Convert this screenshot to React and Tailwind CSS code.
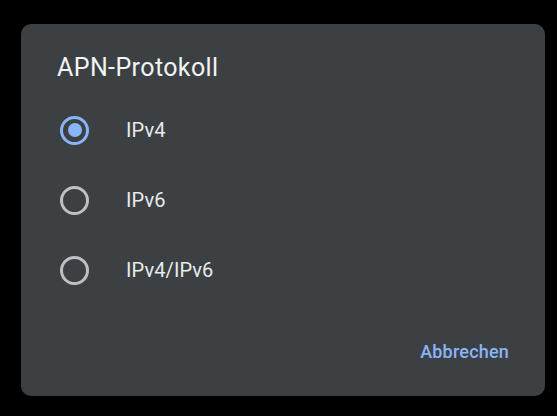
import React, { useState } from "react";

const options = ["IPv4", "IPv6", "IPv4/IPv6"];

const Radio = ({ checked }) => (
  <div
    className={`w-[29px] h-[29px] rounded-full border-[3px] flex items-center justify-center ${
      checked ? "border-[#8ab4f8]" : "border-[#bdc1c6]"
    }`}
  >
    {checked && <div className="w-[14px] h-[14px] rounded-full bg-[#8ab4f8]" />}
  </div>
);

const App = () => {
  const [selected, setSelected] = useState("IPv4");

  return (
    <div
      className="w-[557px] h-[416px] bg-black pt-[24px] pl-[21px]"
      style={{ fontFamily: "Roboto, 'Liberation Sans', sans-serif" }}
    >
      <div className="w-[524px] h-[372px] rounded-[10px] bg-[#3c4043] flex flex-col px-[36px] pt-[28px]">
        <h2 className="text-[25px] leading-[32px] tracking-[0.4px] text-[#f1f3f4] font-normal">
          APN-Protokoll
        </h2>
        <div className="mt-[11px] flex flex-col">
          {options.map((opt) => (
            <div
              key={opt}
              className="h-[70px] flex items-center pl-[3px] cursor-pointer"
              onClick={() => setSelected(opt)}
            >
              <Radio checked={selected === opt} />
              <span className="ml-[37px] text-[20px] leading-[24px] tracking-[0.1px] text-[#e8eaed]">
                {opt}
              </span>
            </div>
          ))}
        </div>
        <div className="mt-[26px] h-[40px] flex items-center justify-end">
          <button className="text-[18px] font-medium tracking-[0.2px] text-[#8ab4f8]">
            Abbrechen
          </button>
        </div>
      </div>
    </div>
  );
};

export default App;
